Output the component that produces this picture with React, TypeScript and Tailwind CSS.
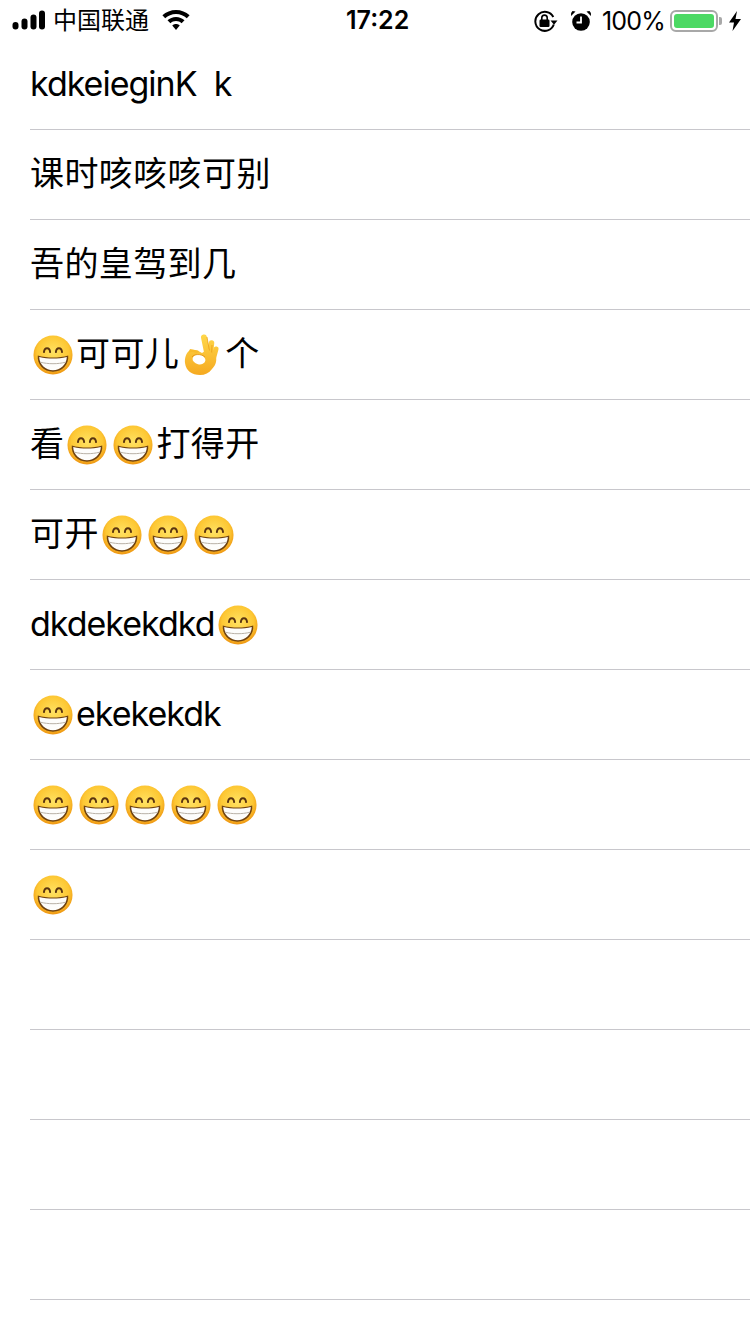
import type { ReactNode } from "react";

const font = "font-['Inter','Noto_Sans_CJK_SC',sans-serif]";

function GrinEmoji() {
  return (
    <span className="mt-[1px] inline-flex w-[46px] shrink-0 items-center justify-center">
      <svg viewBox="0 0 42 42" className="h-[40px] w-[40px]">
        <defs>
          <radialGradient id="grinFace" cx="50%" cy="42%" r="60%">
            <stop offset="0%" stopColor="#ffe262" />
            <stop offset="68%" stopColor="#fdc733" />
            <stop offset="100%" stopColor="#ec8f0c" />
          </radialGradient>
        </defs>
        <circle cx="21" cy="21" r="20.500" fill="url(#grinFace)" />
        <path d="M11.500 18c.5-5.500 6-5.500 6.500 0" fill="none" stroke="#5a3410" strokeWidth="2" strokeLinecap="round" />
        <path d="M24 18c.5-5.500 6-5.500 6.500 0" fill="none" stroke="#5a3410" strokeWidth="2" strokeLinecap="round" />
        <path d="M5 21.500c10 2.800 22 2.800 32 0 1 9.500-6.500 17-16 17S4 31 5 21.500Z" fill="#6f4210" />
        <path d="M6.500 23c9.500 2.400 19.500 2.400 29 0-.2 8-6.800 14-14.500 14S6.700 31 6.500 23Z" fill="#fdfdfb" />
        <path d="M7.500 28.500c8.500 2.200 18.500 2.200 27 0" fill="none" stroke="#b5aea2" strokeWidth="1" />
      </svg>
    </span>
  );
}

function OkEmoji() {
  return (
    <span className="mt-[1px] inline-flex w-[46px] shrink-0 items-center justify-center">
      <svg viewBox="0 0 45 50" className="h-[50px] w-[45px]">
        <defs>
          <linearGradient id="okHand" gradientUnits="userSpaceOnUse" x1="20" y1="4" x2="20" y2="46">
            <stop offset="0%" stopColor="#ffd84a" />
            <stop offset="100%" stopColor="#f5a81f" />
          </linearGradient>
        </defs>
        <g stroke="url(#okHand)" strokeLinecap="round" fill="none">
          <path d="M28 27 24 7.500" strokeWidth="6" />
          <path d="M30 28 31.500 13" strokeWidth="5.500" />
          <path d="M33 30 36 19" strokeWidth="5" />
        </g>
        <path d="M27 7 30 24M32 15l-.5 11" fill="none" stroke="#e8960f" strokeWidth="0.700" />
        <path
          d="M10 20c4-1 8 0 12 3l6-4 8 8c1 5-1 9-4 12-3 4-7 6-12 6-8 0-14-4-15-12-.5-5 1-10 5-13Z"
          fill="url(#okHand)"
        />
        <path d="M10 19 8.500 23c3-1.500 6-1 8 .500L19 21Z" fill="#f9bc2c" />
        <ellipse cx="19" cy="29.500" rx="6.500" ry="4.800" fill="#fff" transform="rotate(12 19 29.500)" />
        <path d="M12 27c2-3 9-3.500 13 0" fill="none" stroke="#df8f10" strokeWidth="0.800" />
      </svg>
    </span>
  );
}

function Latin({ children }: { children: ReactNode }) {
  return <span className="tracking-[-1px]">{children}</span>;
}

function Cjk({ children }: { children: ReactNode }) {
  return <span className="tracking-[0.4px]">{children}</span>;
}

function Row({ children }: { children?: ReactNode }) {
  return (
    <li className="ml-[30px] flex h-[90px] items-center whitespace-pre border-b border-[#c8c7cc] pb-[1px] text-[34px] leading-[42px] text-black">
      {children}
    </li>
  );
}

function StatusBar() {
  return (
    <div className="relative flex h-10 items-center justify-between pt-[2px] text-black">
      <div className="flex items-center">
        <svg viewBox="0 0 34 20" className="mb-[2px] ml-[12px] h-[20px] w-[34px]" fill="#000">
          <rect x="0.500" y="12" width="6" height="7.500" rx="3" />
          <rect x="9.500" y="8.500" width="6" height="11" rx="3" />
          <rect x="18.500" y="4.500" width="6" height="15" rx="3" />
          <rect x="27" y="0.500" width="6" height="19" rx="3" />
        </svg>
        <span className="ml-[7px] text-[24px] leading-[38px]">中国联通</span>
        <svg viewBox="0 0 28 20" className="mb-[2px] ml-[13px] h-[20px] w-[28px]" fill="#000">
          <path d="M14 0C8.800 0 4 2 .4 5.300l2.800 3C6 5.700 9.800 4.100 14 4.100s8 1.600 10.800 4.200l2.800-3C24 2 19.200 0 14 0Z" />
          <path d="M14 7c-3.300 0-6.300 1.300-8.500 3.300l2.900 3c1.500-1.300 3.400-2.200 5.600-2.200s4.100.9 5.600 2.200l2.900-3C20.300 8.300 17.300 7 14 7Z" />
          <path d="M14 14c-1.500 0-2.800.6-3.700 1.400L14 20l3.700-4.600C16.800 14.600 15.500 14 14 14Z" />
        </svg>
      </div>
      <span className="absolute left-[346px] top-[1px] text-[25px] font-semibold leading-[38px]">17:22</span>
      <div className="flex items-center">
        <svg viewBox="0 0 24 22" className="h-[22px] w-[24px]" fill="none" stroke="#000">
          <path d="M19.800 14.500A9.500 9.500 0 1 1 19.300 7" strokeWidth="2" />
          <path d="M16.500 10.500h7l-3.500 4.300Z" fill="#000" stroke="none" />
          <rect x="5.500" y="9.500" width="10" height="7.500" rx="1.200" fill="#000" stroke="none" />
          <path d="M7.800 10V7.800a2.700 2.700 0 0 1 5.400 0V10" strokeWidth="1.600" />
        </svg>
        <svg viewBox="0 0 22 22" className="ml-[12px] h-[22px] w-[22px]" fill="#000">
          <circle cx="11" cy="12" r="8.800" />
          <path d="M1 6 5.500 1.500 2.500 1Q.5 2.500 1 6ZM21 6l-4.500-4.500 3-.5q2 1.500 1.500 5Z" />
          <path d="M11 6.500V12.500H6.500" fill="none" stroke="#fff" strokeWidth="1.800" />
        </svg>
        <span className="ml-[10px] text-[25px] leading-[38px] tracking-[-0.8px]">100%</span>
        <div className="ml-[5px] flex h-[22px] w-[48px] items-center rounded-[6px] border-2 border-[#a8a8a8] p-[2px]">
          <div className="h-full w-full rounded-[3px] bg-[#4cd964]" />
        </div>
        <div className="ml-[1px] h-[8px] w-[3px] rounded-r-[2px] bg-[#a8a8a8]" />
        <svg viewBox="0 0 12 20" className="ml-[7px] mr-[9px] h-[20px] w-[12px]" fill="#000">
          <path d="M8 0 0 11.500h5L3.500 20 12 8H6.500Z" />
        </svg>
      </div>
    </div>
  );
}

export default function App() {
  return (
    <div className={`h-[1334px] w-[750px] overflow-hidden bg-white ${font}`}>
      <StatusBar />
      <ul>
        <Row>
          <Latin>kdkeieginK  k</Latin>
        </Row>
        <Row>
          <Cjk>课时咳咳咳可别</Cjk>
        </Row>
        <Row>
          <Cjk>吾的皇驾到几</Cjk>
        </Row>
        <Row>
          <GrinEmoji />
          <Cjk>可可儿</Cjk>
          <OkEmoji />
          <Cjk>个</Cjk>
        </Row>
        <Row>
          <Cjk>看</Cjk>
          <GrinEmoji />
          <GrinEmoji />
          <Cjk>打得开</Cjk>
        </Row>
        <Row>
          <Cjk>可开</Cjk>
          <GrinEmoji />
          <GrinEmoji />
          <GrinEmoji />
        </Row>
        <Row>
          <Latin>dkdekekdkd</Latin>
          <GrinEmoji />
        </Row>
        <Row>
          <GrinEmoji />
          <Latin>ekekekdk</Latin>
        </Row>
        <Row>
          <GrinEmoji />
          <GrinEmoji />
          <GrinEmoji />
          <GrinEmoji />
          <GrinEmoji />
        </Row>
        <Row>
          <GrinEmoji />
        </Row>
        <Row />
        <Row />
        <Row />
        <Row />
      </ul>
    </div>
  );
}
